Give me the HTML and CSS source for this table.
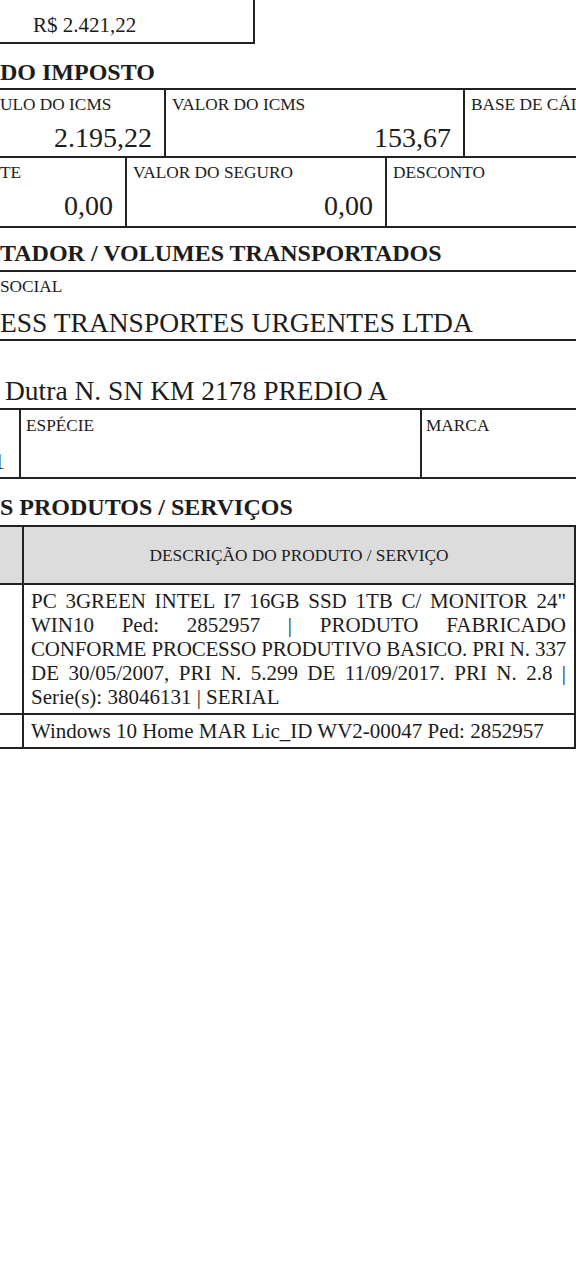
FILE: index.html
```html
<!DOCTYPE html>
<html lang="pt-BR">
<head>
<meta charset="utf-8">
<title>DANFE</title>
<link rel="stylesheet" href="styles.css">
</head>
<body>
<div class="page">
  <div class="total-box"><span>R$ 2.421,22</span></div>

  <h2 class="heading h-imposto">DO IMPOSTO</h2>

  <div class="row row-icms">
    <div class="cell first"><div class="label">ULO DO ICMS</div><div class="value">2.195,22</div></div>
    <div class="cell"><div class="label">VALOR DO ICMS</div><div class="value">153,67</div></div>
    <div class="cell"><div class="label">BASE DE CÁL</div></div>
  </div>
  <div class="row row-frete">
    <div class="cell first"><div class="label">TE</div><div class="value">0,00</div></div>
    <div class="cell"><div class="label">VALOR DO SEGURO</div><div class="value">0,00</div></div>
    <div class="cell"><div class="label">DESCONTO</div></div>
  </div>

  <h2 class="heading h-transp">TADOR / VOLUMES TRANSPORTADOS</h2>

  <div class="block razao">
    <div class="label">SOCIAL</div>
    <div class="big">ESS TRANSPORTES URGENTES LTDA</div>
  </div>
  <div class="block endereco">
    <div class="big">Dutra N. SN KM 2178 PREDIO A</div>
  </div>

  <div class="row row-vol">
    <div class="cell first"><div class="qty">1</div></div>
    <div class="cell"><div class="label">ESPÉCIE</div></div>
    <div class="cell"><div class="label">MARCA</div></div>
  </div>

  <h2 class="heading h-prod">S PRODUTOS / SERVIÇOS</h2>

  <div class="prod">
    <div class="prow phead">
      <div class="pcell pfirst"></div>
      <div class="pcell pdesc-head">DESCRIÇÃO DO PRODUTO / SERVIÇO</div>
    </div>
    <div class="prow">
      <div class="pcell pfirst"></div>
      <div class="pcell pdesc">
        <span class="jl">PC 3GREEN INTEL I7 16GB SSD 1TB C/ MONITOR 24"</span>
        <span class="jl">WIN10 Ped: 2852957 | PRODUTO FABRICADO</span>
        <span class="jl tight">CONFORME PROCESSO PRODUTIVO BASICO. PRI N. 337</span>
        <span class="jl">DE 30/05/2007, PRI N. 5.299 DE 11/09/2017. PRI N. 2.8 |</span>
        <span class="ll">Serie(s): 38046131 | SERIAL</span>
      </div>
    </div>
    <div class="prow">
      <div class="pcell pfirst"></div>
      <div class="pcell pdesc">Windows 10 Home MAR Lic_ID WV2-00047 Ped: 2852957</div>
    </div>
  </div>
</div>
</body>
</html>
```

FILE: styles.css
```css
html, body {
  margin: 0;
  padding: 0;
  background: #fff;
}
body {
  font-family: "Liberation Serif", "Times New Roman", serif;
  color: #1c1c1c;
  width: 576px;
  overflow: hidden;
}
.page {
  width: 576px;
}
.total-box {
  width: 255px;
  height: 44px;
  border-right: 2px solid #222;
  border-bottom: 2px solid #222;
  box-sizing: border-box;
  font-size: 21px;
  line-height: 24px;
  padding-top: 13px;
}
.total-box span {
  margin-left: 33px;
}
.heading {
  margin: 0;
  font-weight: bold;
  font-size: 24px;
  line-height: 28px;
  white-space: nowrap;
  box-sizing: border-box;
  border-bottom: 2px solid #222;
}
.h-imposto {
  height: 46px;
  padding-top: 14px;
}
.row {
  display: grid;
  border-bottom: 2px solid #222;
  box-sizing: border-box;
}
.row-icms {
  grid-template-columns: 164px 299px 1fr;
  height: 68px;
}
.row-frete {
  grid-template-columns: 125px 260px 1fr;
  height: 70px;
}
.cell {
  border-left: 2px solid #222;
  padding: 6px 12px 0 6px;
  display: flex;
  flex-direction: column;
  min-width: 0;
  overflow: hidden;
}
.cell.first {
  border-left: none;
  padding-left: 0;
}
.label {
  font-size: 17.3px;
  line-height: 18px;
  white-space: nowrap;
}
.value {
  font-size: 28px;
  line-height: 32px;
  text-align: right;
  margin-top: 8px;
}
.h-transp {
  height: 44px;
  padding-top: 11px;
}
.block {
  border-bottom: 2px solid #222;
  box-sizing: border-box;
  white-space: nowrap;
}
.razao {
  height: 69px;
  padding-top: 6px;
}
.big {
  font-size: 27.5px;
  line-height: 32px;
}
.razao .big {
  margin-top: 11px;
}
.endereco {
  height: 69px;
  padding-top: 34px;
  padding-left: 5px;
}
.row-vol {
  grid-template-columns: 19px 401px 1fr;
  height: 69px;
}
.row-vol .cell {
  padding-top: 7px;
  padding-left: 5px;
}
.row-vol .cell:last-child {
  padding-left: 4px;
}
.row-vol .cell.first {
  padding: 0;
}
.qty {
  font-size: 24px;
  line-height: 28px;
  margin-top: 37px;
  margin-left: -7px;
}
.h-prod {
  height: 48px;
  padding-top: 14px;
}
.prod {
  width: 576px;
}
.prow {
  display: grid;
  grid-template-columns: 22px 1fr;
  border-bottom: 2px solid #222;
  border-right: 2px solid #222;
  width: 576px;
  box-sizing: border-box;
}
.phead {
  background: #dcdcdc;
  height: 58px;
}
.pcell {
  min-width: 0;
}
.pcell + .pcell {
  border-left: 2px solid #222;
}
.pdesc-head {
  font-size: 17.3px;
  display: flex;
  align-items: center;
  justify-content: center;
  padding-top: 2px;
}
.pdesc {
  font-size: 21px;
  line-height: 24px;
  padding: 4px 8px 4px 7px;
}
.jl {
  display: block;
  white-space: nowrap;
  text-align: justify;
  text-align-last: justify;
}
.tight {
  letter-spacing: -0.2px;
}
.ll {
  display: block;
  white-space: nowrap;
}
```
